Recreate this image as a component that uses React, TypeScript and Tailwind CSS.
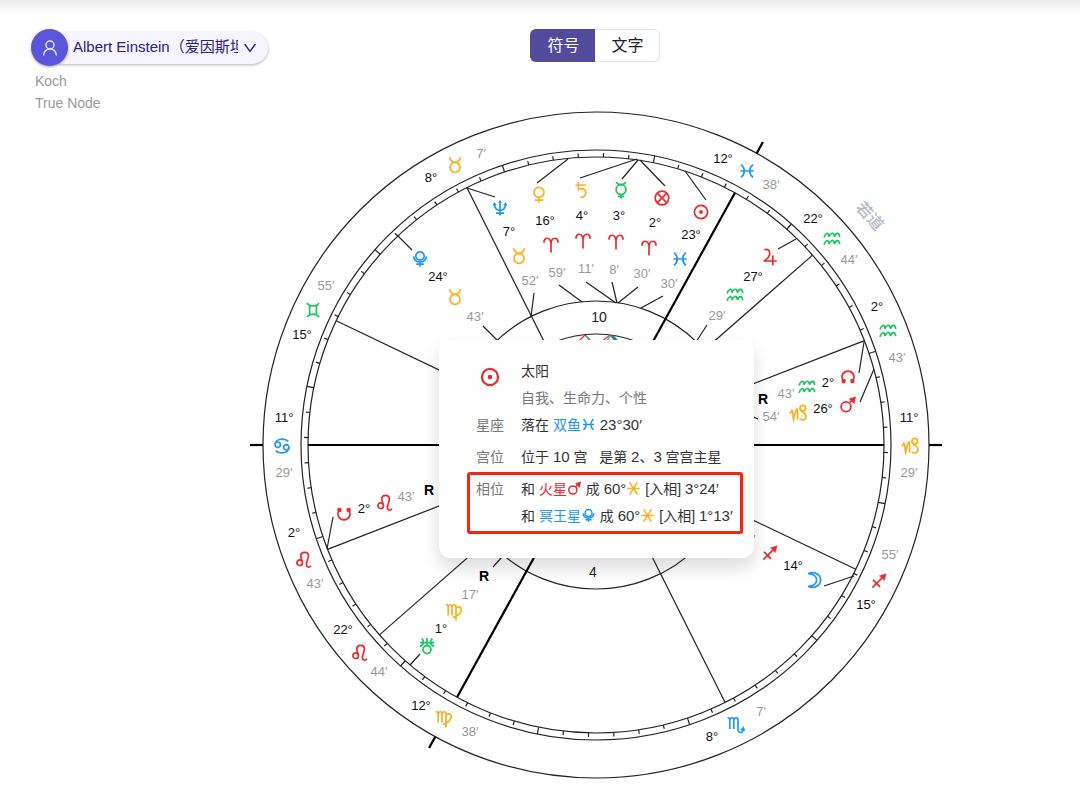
import { useState } from 'react'
import type { ReactNode } from 'react'

const RED = '#f0282d'
const BLUE = '#1e96ff'
const ORANGE = '#fbb01e'
const GREEN = '#12c95e'

const CX = 596
const CY = 445
const R_OUTER = 333
const R_RING = 295
const R_INNER = 288
const R_HOUSE = 144
const R_ASPECT = 111
const ASCENDANT = 101.48

type GlyphName =
  | 'aries'
  | 'taurus'
  | 'gemini'
  | 'cancer'
  | 'leo'
  | 'virgo'
  | 'scorpio'
  | 'sagittarius'
  | 'capricorn'
  | 'aquarius'
  | 'pisces'
  | 'sun'
  | 'moon'
  | 'mercury'
  | 'venus'
  | 'mars'
  | 'jupiter'
  | 'saturn'
  | 'uranus'
  | 'neptune'
  | 'pluto'
  | 'northNode'
  | 'southNode'
  | 'fortune'
  | 'sextile'

// every glyph is drawn around 0,0 in a box of 18 units
const glyphs: Record<GlyphName, { color: string; shape: ReactNode }> = {
  aries: {
    color: RED,
    shape: <path d="M-7 -2.2C-7.4 -8.2 -.6 -8.6 0 -1.5V7.5M0 -1.5C.6 -8.6 7.4 -8.2 7 -2.2" />,
  },
  taurus: {
    color: ORANGE,
    shape: (
      <>
        <circle cx="0" cy="2.4" r="5" />
        <path d="M-5.5 -7.8C-4.5 -4.4 -2.6 -2.7 0 -2.7S4.5 -4.4 5.5 -7.8" />
      </>
    ),
  },
  gemini: {
    color: GREEN,
    shape: <path d="M-6 -7.2C-3.6 -3 3.6 -3 6 -7.2M-6 7.2C-3.6 3 3.6 3 6 7.2M-3.4 -4.6V4.6M3.4 -4.6V4.6" />,
  },
  cancer: {
    color: BLUE,
    shape: (
      <>
        <circle cx="-4.3" cy="-1.3" r="2.7" />
        <circle cx="4.3" cy="1.3" r="2.7" />
        <path d="M-7 -1.8C-6 -7.8 3 -8 6.3 -4.6M7 1.8C6 7.8 -3 8 -6.3 4.6" />
      </>
    ),
  },
  leo: {
    color: RED,
    shape: (
      <>
        <circle cx="-4.3" cy="2.7" r="2.8" />
        <path d="M-1.7 1.6C-2.4 -.6 -3.4 -2.6 -3.2 -4.4C-2.8 -8.8 4.6 -8.8 4.4 -3.8C4.2 -.8 2 2.4 2.4 5C2.8 8 5.8 7.8 7 5.6" />
      </>
    ),
  },
  virgo: {
    color: ORANGE,
    shape: (
      <path d="M-8 -7.4C-6.6 -7.6 -5.8 -6.6 -5.8 -5V3.6M-5.8 -5C-5.2 -8 -2 -8 -2 -5V3.6M-2 -5C-1.4 -8 2 -8 2 -5V8.5M2 -3.6C3.6 -6.2 7.6 -5.6 7.2 -1.8C6.8 1.8 3 4.2 -1 5.6" />
    ),
  },
  scorpio: {
    color: BLUE,
    shape: (
      <>
        <path d="M-8.4 -7.2C-7 -7.4 -6.2 -6.4 -6.2 -5V4M-6.2 -5C-5.6 -8 -2.2 -8 -2.2 -5V4M-2.2 -5C-1.6 -8 2 -8 2 -5V4C2 8.4 6.4 8.6 7 4.8" />
        <path d="M4 5L9.4 6L7.6 1.2Z" fill="currentColor" strokeWidth="0" />
      </>
    ),
  },
  sagittarius: {
    color: RED,
    shape: (
      <>
        <path d="M-6.6 6.6L4 -4M-6 -1.2L1 5.8" />
        <path d="M.4 -5.2L7.2 -7.2L5.2 -.4Z" fill="currentColor" strokeWidth="0.5" />
      </>
    ),
  },
  capricorn: {
    color: ORANGE,
    shape: (
      <>
        <circle cx="4.8" cy="-4.8" r="2.8" />
        <path d="M-8.2 .2C-7.4 -.4 -6.6 -1.6 -6 -2.8C-4.8 -1.6 -5.4 3 -4.4 6.6C-3.4 3 -3 -2.2 -1 -4.2C.2 -2.4 -.8 4 -.2 6.6M2 -5C1.6 -.8 7.8 -.8 8 3C8.2 7.4 4 7.8 1.8 5.8" />
      </>
    ),
  },
  aquarius: {
    color: GREEN,
    shape: (
      <path d="M-8 -1.4C-6.6 -5.8 -3.4 -7.6 -3 -2.2C-1.4 -6.2 2 -7.6 2.4 -2.2C4 -6.2 7.4 -7.2 7.6 -2M-8 5.8C-6.6 1.4 -3.4 -.4 -3 5C-1.4 1 2 -.4 2.4 5C4 1 7.4 0 7.6 5.2" />
    ),
  },
  pisces: {
    color: BLUE,
    shape: <path d="M-6 -6.4C-1.6 -3 -1.6 3 -6 6.4M6 -6.4C1.6 -3 1.6 3 6 6.4M-6.6 0H6.6" />,
  },
  sun: {
    color: RED,
    shape: (
      <>
        <circle cx="0" cy="0" r="6.6" />
        <circle cx="0" cy="0" r="1.9" fill="currentColor" strokeWidth="0" />
      </>
    ),
  },
  moon: {
    color: BLUE,
    shape: (
      <path d="M-5.8 -6.4C.6 -9.2 6.6 -5.4 6.6 0S.6 9.2 -5.8 6.4C-.6 6.2 2.6 3.6 2.6 0S-.6 -6.2 -5.8 -6.4Z" />
    ),
  },
  mercury: {
    color: GREEN,
    shape: (
      <>
        <circle cx="0" cy="-.4" r="4.9" />
        <path d="M-4.8 -8C-4 -6.2 -2.4 -5.4 0 -5.4S4 -6.2 4.8 -8M0 4.4V8.4M-3.2 6.4H3.2" />
      </>
    ),
  },
  venus: {
    color: ORANGE,
    shape: (
      <>
        <circle cx="0" cy="-2.6" r="5" />
        <path d="M0 2.4V7.8M-4.2 5.2H4.2" />
      </>
    ),
  },
  mars: {
    color: RED,
    shape: (
      <>
        <circle cx="-2" cy="1.8" r="4.9" />
        <path d="M1.6 -2.4L4.6 -5.4" />
        <path d="M.8 -6.2L8 -8.4L6.2 -1Z" fill="currentColor" strokeWidth="0" />
      </>
    ),
  },
  jupiter: {
    color: RED,
    shape: <path d="M-5.6 -7.2C-2.6 -8.8 .6 -6.2 -.6 -2C-1.6 1.4 -4 3 -6.2 4H6.8M2.8 -1.6V8.2" />,
  },
  saturn: {
    color: ORANGE,
    shape: <path d="M-5.6 -5H5M-2.6 -8V-.4C.4 -2.4 4.8 -1.4 4.8 2.6C4.8 5.6 2.8 7.6 -.6 7.4" />,
  },
  uranus: {
    color: GREEN,
    shape: (
      <>
        <circle cx="0" cy="3.6" r="4" />
        <path d="M0 -8V-.6M-5.4 -7.6C-2.6 -5.4 -2.8 -1.4 -7 .4M5.4 -7.6C2.6 -5.4 2.8 -1.4 7 .4M-7 -3.4H7" />
      </>
    ),
  },
  neptune: {
    color: BLUE,
    shape: (
      <>
        <path d="M0 -6V7.6M-5.4 -4C-5.8 .6 -3 2.4 0 2.4S5.8 .6 5.4 -4M-4 5.2H4" />
        <path
          d="M-2 -5L0 -8.2L2 -5ZM-7.4 -2.2L-5.6 -6L-3.4 -3ZM7.4 -2.2L5.6 -6L3.4 -3Z"
          fill="currentColor"
          strokeWidth="0"
        />
      </>
    ),
  },
  pluto: {
    color: BLUE,
    shape: (
      <>
        <circle cx="0" cy="-3" r="4.2" />
        <path d="M-6.4 -2.6C-6 1.4 -3.4 3 0 3S6 1.4 6.4 -2.6M0 3V7.6M-3.8 5.2H3.8" />
      </>
    ),
  },
  northNode: {
    color: RED,
    shape: (
      <>
        <path d="M-4.6 4.2C-8 -1 -4.6 -5.8 0 -5.8S8 -1 4.6 4.2" />
        <circle cx="-4.4" cy="4" r="2.2" fill="currentColor" strokeWidth="0" />
        <circle cx="4.4" cy="4" r="2.2" fill="currentColor" strokeWidth="0" />
      </>
    ),
  },
  southNode: {
    color: RED,
    shape: (
      <>
        <path d="M-4.6 -4.2C-8 1 -4.6 5.8 0 5.8S8 1 4.6 -4.2" />
        <circle cx="-4.6" cy="-4" r="2.2" fill="currentColor" strokeWidth="0" />
        <circle cx="4.6" cy="-4" r="2.2" fill="currentColor" strokeWidth="0" />
      </>
    ),
  },
  fortune: {
    color: RED,
    shape: (
      <>
        <circle cx="0" cy="0" r="6.8" />
        <path d="M-4.8 -4.8L4.8 4.8M4.8 -4.8L-4.8 4.8" />
      </>
    ),
  },
  sextile: {
    color: ORANGE,
    shape: <path d="M-7.4 0H7.4M-4.6 -7.4L4.6 7.4M4.6 -7.4L-4.6 7.4" />,
  },
}

type Placed = {
  glyph: [GlyphName, number, number]
  degree: [string, number, number]
  sign?: [GlyphName, number, number]
  minute: [string, number, number]
  retrograde?: [number, number]
}

const cusps = [101.48, 122.72, 142.73, 162.63, 218.12, 255.92, 281.48, 302.72, 322.73, 342.63, 38.12, 75.92]

const cuspLabels: Placed[] = [
  { glyph: ['cancer', 282, 446], degree: ['11°', 284, 417], minute: ['29′', 284, 472] },
  { glyph: ['leo', 304, 560], degree: ['2°', 294, 532], minute: ['43′', 315, 583] },
  { glyph: ['leo', 360, 653], degree: ['22°', 343, 629], minute: ['44′', 379, 671] },
  { glyph: ['virgo', 444, 719], degree: ['12°', 421, 705], minute: ['38′', 470, 731] },
  { glyph: ['scorpio', 736, 725], degree: ['8°', 712, 736], minute: ['7′', 761, 711] },
  { glyph: ['sagittarius', 879, 581], degree: ['15°', 866, 604], minute: ['55′', 890, 554] },
  { glyph: ['capricorn', 910, 446], degree: ['11°', 909, 417], minute: ['29′', 909, 472] },
  { glyph: ['aquarius', 888, 331], degree: ['2°', 877, 306], minute: ['43′', 897, 357] },
  { glyph: ['aquarius', 832, 239], degree: ['22°', 813, 218], minute: ['44′', 849, 259] },
  { glyph: ['pisces', 747, 171], degree: ['12°', 723, 158], minute: ['38′', 771, 184] },
  { glyph: ['taurus', 455, 165], degree: ['8°', 431, 177], minute: ['7′', 481, 153] },
  { glyph: ['gemini', 313, 310], degree: ['15°', 302, 334], minute: ['55′', 326, 285] },
]

const planets: Placed[] = [
  { glyph: ['sun', 701, 212], degree: ['23°', 691, 234], sign: ['pisces', 680, 259], minute: ['30′', 669, 283] },
  { glyph: ['moon', 814, 580], degree: ['14°', 793, 565], sign: ['sagittarius', 770, 553], minute: ['32′', 747, 539] },
  { glyph: ['mercury', 621, 190], degree: ['3°', 619, 215], sign: ['aries', 616, 242], minute: ['8′', 614, 269] },
  { glyph: ['venus', 539, 195], degree: ['16°', 545, 220], sign: ['aries', 551, 245], minute: ['59′', 557, 272] },
  { glyph: ['mars', 848, 405], degree: ['26°', 823, 408], sign: ['capricorn', 798, 413], minute: ['54′', 771, 416] },
  { glyph: ['jupiter', 770, 257], degree: ['27°', 753, 276], sign: ['aquarius', 735, 295], minute: ['29′', 717, 315] },
  { glyph: ['saturn', 581, 190], degree: ['4°', 582, 215], sign: ['aries', 583, 241], minute: ['11′', 586, 268] },
  {
    glyph: ['uranus', 427, 646],
    degree: ['1°', 441, 628],
    sign: ['virgo', 454, 612],
    minute: ['17′', 470, 594],
    retrograde: [484, 576],
  },
  { glyph: ['neptune', 500, 208], degree: ['7°', 509, 231], sign: ['taurus', 519, 256], minute: ['52′', 530, 280] },
  { glyph: ['pluto', 420, 259], degree: ['24°', 438, 276], sign: ['taurus', 455, 297], minute: ['43′', 475, 316] },
  {
    glyph: ['northNode', 848, 377],
    degree: ['2°', 828, 382],
    sign: ['aquarius', 807, 387],
    minute: ['43′', 786, 393],
    retrograde: [763, 399],
  },
  {
    glyph: ['southNode', 344, 514],
    degree: ['2°', 364, 508],
    sign: ['leo', 385, 503],
    minute: ['43′', 406, 496],
    retrograde: [429, 490],
  },
  { glyph: ['fortune', 662, 198], degree: ['2°', 655, 222], sign: ['aries', 649, 248], minute: ['30′', 642, 273] },
]

// short pointers from the glyphs to the rings
const pointers = [
  'M467 188L495 197M534 293L531 317',
  'M568 159L537 183M559 285L582 302',
  'M637 159L580 178M586 282L616 303',
  'M638 160L622 179M612 282L617 303',
  'M640 160L665 186M638 287L618 303',
  'M685 171L706 200M663 296L641 308',
  'M796 239L778 249M707 325L696 342',
  'M864 342L859 373M874 369L860 402M740 411L758 419',
  'M854 576L824 586',
  'M410 665L420 654M493 567L502 557',
  'M327 549L333 517',
  'M397 235L412 250M483 326L498 341',
]

const point = (longitude: number, radius: number) => {
  const angle = ((180 + longitude - ASCENDANT) * Math.PI) / 180
  return [CX + radius * Math.cos(angle), CY - radius * Math.sin(angle)]
}

const radial = (longitude: number, from: number, to: number) => {
  const [x1, y1] = point(longitude, from)
  const [x2, y2] = point(longitude, to)
  return `M${x1.toFixed(2)} ${y1.toFixed(2)}L${x2.toFixed(2)} ${y2.toFixed(2)}`
}

const ticks = Array.from({ length: 72 }, (_, i) => radial(i * 5, R_INNER, i % 6 === 0 ? R_RING : R_INNER + 4)).join('')

const ChartGlyph = ({ name, x, y }: { name: GlyphName; x: number; y: number }) => (
  <g
    color={glyphs[name].color}
    fill="none"
    stroke="currentColor"
    strokeWidth="1.7"
    transform={`translate(${x} ${y})`}
  >
    {glyphs[name].shape}
  </g>
)

const InlineGlyph = ({ name, className }: { name: GlyphName; className: string }) => (
  <svg
    aria-hidden="true"
    className={`inline-block shrink-0 ${className}`}
    color={glyphs[name].color}
    fill="none"
    stroke="currentColor"
    strokeWidth="1.8"
    viewBox="-9 -9 18 18"
  >
    {glyphs[name].shape}
  </svg>
)

const Label = ({ x, y, className, children }: { x: number; y: number; className: string; children: ReactNode }) => (
  <text className={className} dy=".36em" textAnchor="middle" x={x} y={y}>
    {children}
  </text>
)

const PlacedItem = ({ item }: { item: Placed }) => (
  <g>
    <ChartGlyph name={item.glyph[0]} x={item.glyph[1]} y={item.glyph[2]} />
    <Label className="fill-[#111] text-[13px]" x={item.degree[1]} y={item.degree[2]}>
      {item.degree[0]}
    </Label>
    {item.sign && <ChartGlyph name={item.sign[0]} x={item.sign[1]} y={item.sign[2]} />}
    <Label className="fill-[#999] text-[13px]" x={item.minute[1]} y={item.minute[2]}>
      {item.minute[0]}
    </Label>
    {item.retrograde && (
      <Label className="fill-black text-sm font-bold" x={item.retrograde[0]} y={item.retrograde[1]}>
        R
      </Label>
    )}
  </g>
)

const NatalChart = () => (
  <svg aria-label="星盘" className="block w-full" role="img" viewBox="250 110 692 670">
    <g fill="none" stroke="#222" strokeWidth="1.2">
      <circle cx={CX} cy={CY} r={R_OUTER} />
      <circle cx={CX} cy={CY} r={R_RING} />
      <circle cx={CX} cy={CY} r={R_INNER} />
      <circle cx={CX} cy={CY} r={R_HOUSE} />
      <circle cx={CX} cy={CY} r={R_ASPECT} />
      <path d={ticks} />
      <path d={pointers.join('')} />
    </g>

    <g fill="none" strokeWidth="1.2">
      <path d="M585 335L548 372M585 335L622 372" stroke={RED} />
      <path d="M586 336L640 400M611 335L560 410" stroke={GREEN} />
      <path d="M610 335L560 375M611 335L650 380" stroke={RED} />
      <path d="M612 336L644 370" stroke="#2a7f8f" strokeWidth="3" />
    </g>

    {cusps.map((longitude, index) => {
      const isAngle = index % 3 === 0
      return (
        <g fill="none" key={longitude} stroke={isAngle ? '#000' : '#222'} strokeWidth={isAngle ? 2.2 : 1.2}>
          <path d={radial(longitude, R_ASPECT, R_INNER)} />
          {isAngle && <path d={radial(longitude, R_OUTER, R_OUTER + 13)} />}
        </g>
      )
    })}

    {cuspLabels.map((item, index) => (
      <PlacedItem item={item} key={index} />
    ))}
    {planets.map((item) => (
      <PlacedItem item={item} key={item.glyph[0]} />
    ))}

    <Label className="fill-[#222] text-sm" x={599} y={317}>
      10
    </Label>
    <Label className="fill-[#222] text-sm" x={593} y={572}>
      4
    </Label>

    <g transform="translate(870 216) rotate(48)">
      <Label className="fill-[#b4bac2] text-base font-medium" x={0} y={0}>
        若道
      </Label>
    </g>
  </svg>
)

const DetailRow = ({ label, children }: { label: ReactNode; children: ReactNode }) => (
  <div className="flex leading-[27px] whitespace-nowrap">
    <dt className="w-[45px] shrink-0 text-[#777]">{label}</dt>
    <dd>{children}</dd>
  </div>
)

const Num = ({ children }: { children: ReactNode }) => <span className="text-[15px] leading-none">{children}</span>

const PlanetDetail = () => (
  <dl className="absolute top-[230px] left-[189px] w-[315px] rounded-xl bg-white pt-[18px] pr-[11px] pb-6 pl-7 text-sm text-[#333] shadow-[0_10px_18px_rgba(0,0,0,0.14)]">
    <div className="pb-px pl-[9px]">
      <DetailRow label={<InlineGlyph className="mt-2 ml-[3px] size-[22px] align-top" name="sun" />}>
        <p>太阳</p>
        <p className="text-[#777]">自我、生命力、个性</p>
      </DetailRow>
      <DetailRow label="星座">
        落在 <span className="text-[#1e96ff]">双鱼</span>
        <InlineGlyph className="size-[15px] align-[-2px]" name="pisces" /> <Num>23°30′</Num>
      </DetailRow>
      <div className="mt-[5px]">
        <DetailRow label="宫位">
          位于 <Num>10</Num> 宫 &nbsp; 是第 <Num>2</Num>、<Num>3</Num> 宫宫主星
        </DetailRow>
      </div>
    </div>
    <div className="rounded-[3px] border-[3px] border-[#ff2010] py-px pl-1.5">
      <DetailRow label="相位">
        <p>
          和 <span className="text-[#f0282d]">火星</span>
          <InlineGlyph className="size-[15px] align-[-2px]" name="mars" /> 成 <Num>60°</Num>
          <InlineGlyph className="size-[15px] align-[-2px]" name="sextile" /> [入相] <Num>3°24′</Num>
        </p>
        <p>
          和 <span className="text-[#1e96ff]">冥王星</span>
          <InlineGlyph className="size-[15px] align-[-2px]" name="pluto" /> 成 <Num>60°</Num>
          <InlineGlyph className="size-[15px] align-[-2px]" name="sextile" /> [入相] <Num>1°13′</Num>
        </p>
      </DetailRow>
    </div>
  </dl>
)

const ProfilePicker = () => (
  <div className="w-[237px]">
    <button className="flex h-[37px] w-full items-center text-left" type="button">
      <span className="z-10 flex size-[37px] shrink-0 items-center justify-center rounded-full bg-[#5956dc] shadow-[0_1px_3px_rgba(0,0,0,0.35)]">
        <svg className="size-4" fill="none" stroke="#e4e2ff" strokeWidth="1.4" viewBox="0 0 16 16">
          <circle cx="8" cy="5" r="4" />
          <path d="M1.5 15.5C2 11.5 4.5 9 8 9S14 11.5 14.5 15.5" />
        </svg>
      </span>
      <span className="-ml-5 flex h-8 min-w-0 flex-1 items-center rounded-full bg-[#f6f4ff] pr-3 pl-[25px] text-[15px] text-[#2d2080] shadow-[0_1px_3px_rgba(0,0,0,0.3)]">
        <span className="min-w-0 flex-1 overflow-hidden whitespace-nowrap">Albert Einstein（爱因斯坦</span>
        <svg className="ml-1.5 h-2.5 w-3 shrink-0" fill="none" stroke="#2d2080" strokeWidth="1.4" viewBox="0 0 12 10">
          <path d="M.6 1L6 8.4L11.4 1" />
        </svg>
      </span>
    </button>
    <p className="mt-1 ml-1 text-sm leading-[22px] text-[#999]">
      Koch
      <br />
      True Node
    </p>
  </div>
)

const modes = ['符号', '文字']

const ModeSwitch = () => {
  const [mode, setMode] = useState(modes[0])

  return (
    <div className="flex h-[33px]">
      {modes.map((item) => (
        <button
          aria-pressed={mode === item}
          className={`w-[65px] border text-base leading-none first:rounded-l-md first:border-r-0 last:rounded-r-md last:border-l-0 ${
            mode === item ? 'border-[#524a9b] bg-[#524a9b] text-white' : 'border-[#e4e4e8] bg-white text-[#222]'
          }`}
          key={item}
          onClick={() => setMode(item)}
          type="button"
        >
          {item}
        </button>
      ))}
    </div>
  )
}

const App = () => (
  <main className="min-h-screen bg-white font-['Liberation_Sans','Noto_Sans_CJK_SC',sans-serif]">
    <div className="h-4 bg-linear-to-b from-[#ececec] to-white" />
    <header className="-mb-1 grid grid-cols-[25fr_auto_21fr] items-start pt-[13px] pl-[31px]">
      <ProfilePicker />
      <ModeSwitch />
    </header>
    <div className="flex justify-center pl-28">
      <div className="relative w-full max-w-[692px]">
        <NatalChart />
        <PlanetDetail />
      </div>
    </div>
  </main>
)

export default App
